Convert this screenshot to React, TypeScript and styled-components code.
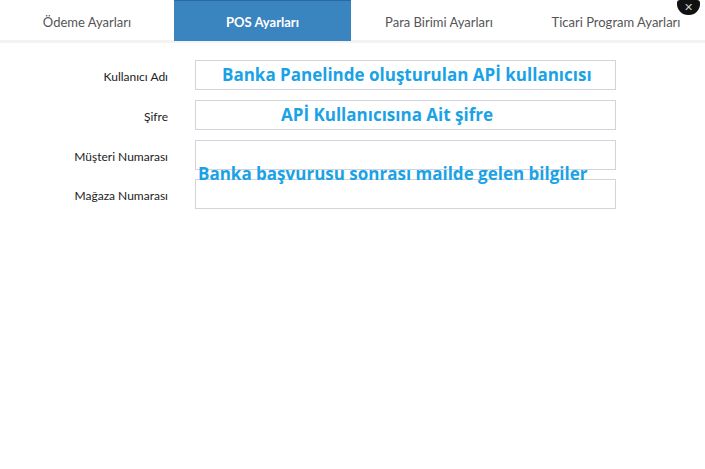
import styled, { createGlobalStyle } from 'styled-components';

const GlobalStyle = createGlobalStyle`
  html, body {
    margin: 0;
    padding: 0;
    background: #fff;
    font-family: Lato, "Open Sans", sans-serif;
  }
`;

const Page = styled.div`
  position: relative;
  width: 705px;
  height: 469px;
  background: #fff;
  overflow: hidden;
`;

const TabBar = styled.div`
  display: grid;
  grid-template-columns: 174px 177px 176px 178px;
  height: 40px;
  border-bottom: 3px solid #f3f3f3;
`;

const Tab = styled.div<{ $active?: boolean }>`
  display: flex;
  align-items: center;
  justify-content: center;
  height: ${({ $active }) => ($active ? '41px' : '40px')};
  box-sizing: border-box;
  padding-top: 2px;
  font-size: 13px;
  font-weight: ${({ $active }) => ($active ? 700 : 400)};
  color: ${({ $active }) => ($active ? '#fff' : '#555')};
  background: ${({ $active }) => ($active ? '#3a84bf' : 'transparent')};
  border-top: 1px solid ${({ $active }) => ($active ? '#2b6aa0' : 'transparent')};
`;

const CloseButton = styled.div`
  position: absolute;
  top: 0;
  right: 5px;
  width: 23px;
  height: 15px;
  border-radius: 3px 3px 11px 11px;
  background: #111;
  color: #ccc;
  display: flex;
  align-items: center;
  justify-content: center;
  font-family: "DejaVu Sans", sans-serif;
  font-size: 11px;
  font-weight: 700;
  line-height: 1;
`;

const Form = styled.div`
  display: flex;
  flex-direction: column;
  gap: 10px;
  padding-top: 17px;
`;

const Row = styled.div<{ $tight?: boolean }>`
  display: grid;
  grid-template-columns: 168px 421px;
  column-gap: 27px;
  align-items: center;
  margin-top: ${({ $tight }) => ($tight ? '-1px' : '0')};
`;

const Label = styled.label`
  text-align: right;
  font-size: 12px;
  color: #222;
  padding-top: 2px;
`;

const Field = styled.div`
  position: relative;
  height: 30px;
  box-sizing: border-box;
  border: 1px solid #d3d3dc;
  background: #fff;
`;

const Note = styled.span<{ $offset: number }>`
  position: absolute;
  top: 50%;
  left: ${({ $offset }) => $offset}px;
  transform: translateY(-52%);
  white-space: nowrap;
  font-family: "Open Sans", sans-serif;
  font-weight: 700;
  font-size: 17px;
  color: #1aa2e6;
`;

const FloatingNote = styled.span`
  position: absolute;
  left: 198px;
  top: 162px;
  white-space: nowrap;
  font-family: "Open Sans", sans-serif;
  font-weight: 700;
  font-size: 17px;
  color: #1aa2e6;
  z-index: 2;
`;

const tabs = ['Ödeme Ayarları', 'POS Ayarları', 'Para Birimi Ayarları', 'Ticari Program Ayarları'];

const fields = [
  { label: 'Kullanıcı Adı', note: 'Banka Panelinde oluşturulan APİ kullanıcısı', offset: 26 },
  { label: 'Şifre', note: 'APİ Kullanıcısına Ait şifre', offset: 85 },
  { label: 'Müşteri Numarası' },
  { label: 'Mağaza Numarası', tight: true },
];

export default function App() {
  return (
    <Page>
      <GlobalStyle />
      <TabBar>
        {tabs.map((t, i) => (
          <Tab key={t} $active={i === 1}>{t}</Tab>
        ))}
      </TabBar>
      <CloseButton>✕</CloseButton>
      <Form>
        {fields.map((f) => (
          <Row key={f.label} $tight={f.tight}>
            <Label>{f.label}</Label>
            <Field>
              {f.note && <Note $offset={f.offset!}>{f.note}</Note>}
            </Field>
          </Row>
        ))}
      </Form>
      <FloatingNote>Banka başvurusu sonrası mailde gelen bilgiler</FloatingNote>
    </Page>
  );
}
